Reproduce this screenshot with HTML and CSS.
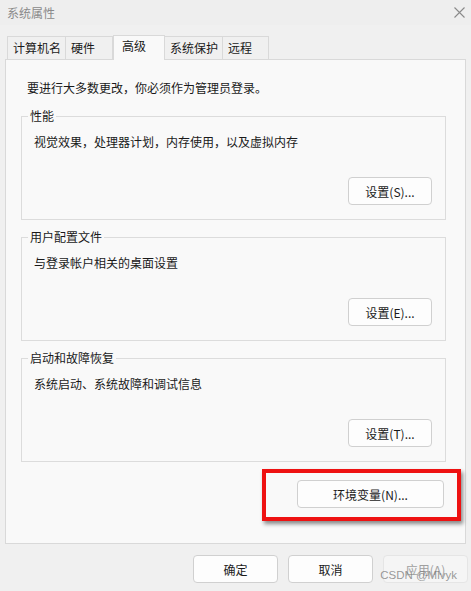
FILE: index.html
```html
<!DOCTYPE html>
<html lang="zh-CN">
<head>
    <meta charset="UTF-8">
    <title>系统属性</title>
    <link rel="stylesheet" href="styles.css">
</head>
<body>

<div class="titlebar">
    <span class="title">系统属性</span>
    <svg class="close" width="11" height="11" viewBox="0 0 11 11">
        <path d="M0.5 0.5 L10.5 10.5 M10.5 0.5 L0.5 10.5" stroke="#8a8a8a" stroke-width="1.1" fill="none"/>
    </svg>
</div>

<div class="tabs">
    <div class="tab tab-1">计算机名</div>
    <div class="tab tab-2">硬件</div>
    <div class="tab tab-active">高级</div>
    <div class="tab tab-4">系统保护</div>
    <div class="tab tab-5">远程</div>
</div>

<div class="panel">
    <p class="intro">要进行大多数更改，你必须作为管理员登录。</p>

    <div class="group">
        <span class="group-title">性能</span>
        <p class="group-desc">视觉效果，处理器计划，内存使用，以及虚拟内存</p>
        <div class="group-actions">
            <button class="btn">设置(S)...</button>
        </div>
    </div>

    <div class="group">
        <span class="group-title">用户配置文件</span>
        <p class="group-desc">与登录帐户相关的桌面设置</p>
        <div class="group-actions">
            <button class="btn">设置(E)...</button>
        </div>
    </div>

    <div class="group">
        <span class="group-title">启动和故障恢复</span>
        <p class="group-desc">系统启动、系统故障和调试信息</p>
        <div class="group-actions">
            <button class="btn">设置(T)...</button>
        </div>
    </div>

    <div class="env-row">
        <div class="highlight">
            <button class="btn btn-env">环境变量(N)...</button>
        </div>
    </div>
</div>

<div class="footer">
    <button class="btn btn-footer">确定</button>
    <button class="btn btn-footer">取消</button>
    <button class="btn btn-footer btn-disabled">应用(A)</button>
    <span class="watermark">CSDN @Mlvyk</span>
</div>

</body>
</html>
```

FILE: styles.css
```css
body {
    margin: 0;
    background-color: #f0f0f0;
    font-family: "Noto Sans CJK SC", "Microsoft YaHei", sans-serif;
    font-size: 12px;
    color: #1a1a1a;
    width: 471px;
    height: 591px;
    overflow: hidden;
}

p {
    margin: 0;
}

.titlebar {
    height: 25px;
    background-color: #eeeeee;
    display: flex;
    align-items: center;
    justify-content: space-between;
    padding: 0 6px 0 7px;
}
.title {
    color: #8a8a8a;
    font-size: 12px;
    line-height: 16px;
}

.tabs {
    display: flex;
    align-items: flex-end;
    margin: 10px 0 0 7px;
}
.tab {
    box-sizing: border-box;
    height: 23px;
    line-height: 21px;
    padding-left: 5px;
    border: 1px solid #d9d9d9;
    border-bottom: none;
    background-color: #f0f0f0;
    white-space: nowrap;
}
.tab + .tab {
    border-left: none;
}
.tab-1 { width: 59px; }
.tab-2 { width: 47px; }
.tab-4 { width: 58px; }
.tab-5 { width: 46px; }
.tab-active {
    position: relative;
    z-index: 1;
    width: 52px;
    height: 25px;
    line-height: 19px;
    padding-left: 8px;
    margin-bottom: -1px;
    background-color: #f9f9f9;
    border-left: 1px solid #d9d9d9 !important;
}

.panel {
    box-sizing: border-box;
    width: 461px;
    height: 485px;
    margin-left: 5px;
    padding: 20px 4px 0 15px;
    background-color: #f9f9f9;
    border: 1px solid #d9d9d9;
}
.intro {
    line-height: 16px;
    padding-left: 6px;
    margin-bottom: 20px;
}

.group {
    box-sizing: border-box;
    width: 425px;
    height: 104px;
    margin-bottom: 17px;
    border: 1px solid #dcdcdc;
}
.group-title {
    display: block;
    width: fit-content;
    margin: -9px 0 0 6px;
    padding: 0 2px;
    line-height: 16px;
    background-color: #f9f9f9;
}
.group-desc {
    line-height: 16px;
    padding-left: 12px;
    margin-top: 10px;
}
.group-actions {
    display: flex;
    justify-content: flex-end;
    padding-right: 13px;
    margin-top: 27px;
}

.btn {
    box-sizing: border-box;
    height: 28px;
    width: 84px;
    padding: 0;
    font-family: inherit;
    font-size: 12px;
    color: #1a1a1a;
    background-color: #fdfdfd;
    border: 1px solid #d0d0d0;
    border-radius: 4px;
}

.env-row {
    display: flex;
    justify-content: flex-end;
    margin-top: -10px;
}
.highlight {
    width: 199px;
    box-sizing: border-box;
    padding: 7px 13px 9px 31px;
    border: 4px solid #ee1111;
    box-shadow: 2px 3px 4px rgba(0, 0, 0, 0.45);
}
.btn-env {
    width: 147px;
}

.footer {
    position: relative;
    display: flex;
    justify-content: flex-end;
    gap: 10px;
    margin: 11px 3px 0 0;
}
.btn-footer {
    width: 85px;
}
.btn-disabled {
    color: #a0a0a0;
    background-color: #f5f5f5;
    border-color: #e5e5e5;
}
.watermark {
    position: absolute;
    right: 11px;
    top: 14px;
    font-family: "Liberation Sans", Arial, sans-serif;
    font-size: 11.5px;
    color: rgba(120, 120, 120, 0.75);
}
```
